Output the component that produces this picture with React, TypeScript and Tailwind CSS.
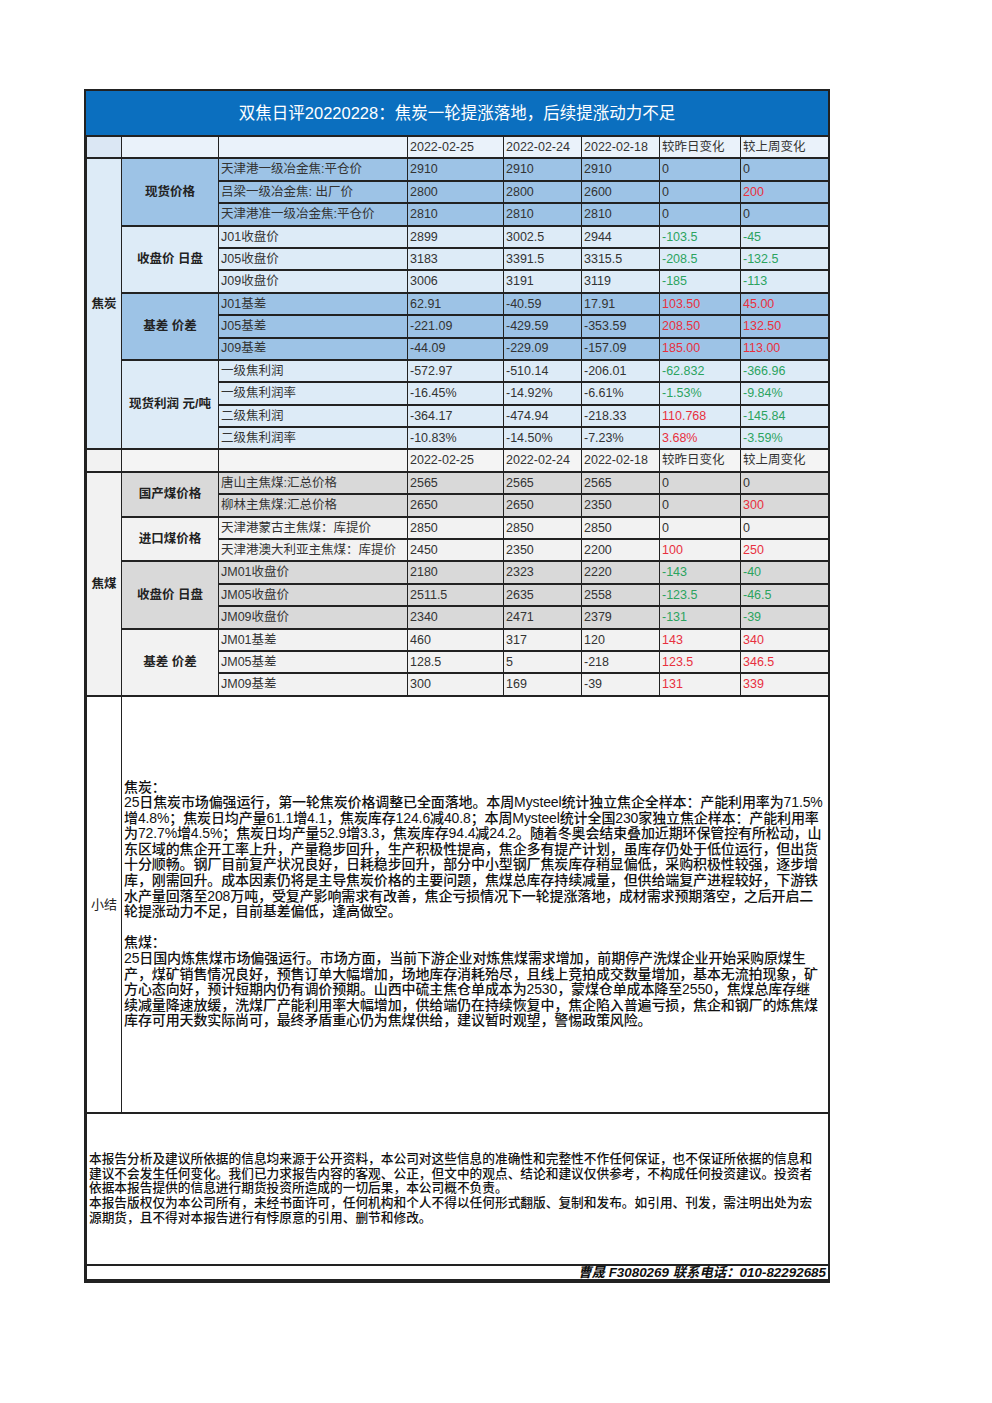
import React from 'react'

type Group = { name: string; bg: string; rows: string[][] }

const MID = 'bg-[#9dc3e6]'
const LIGHT = 'bg-[#ddebf7]'
const GRAY = 'bg-[#d9d9d9]'
const LGRAY = 'bg-[#f2f2f2]'

const coke: Group[] = [
  {
    name: '现货价格',
    bg: MID,
    rows: [
      ['天津港一级冶金焦:平仓价', '2910', '2910', '2910', '0', '0'],
      ['吕梁一级冶金焦: 出厂价', '2800', '2800', '2600', '0', '200'],
      ['天津港准一级冶金焦:平仓价', '2810', '2810', '2810', '0', '0'],
    ],
  },
  {
    name: '收盘价 日盘',
    bg: LIGHT,
    rows: [
      ['J01收盘价', '2899', '3002.5', '2944', '-103.5', '-45'],
      ['J05收盘价', '3183', '3391.5', '3315.5', '-208.5', '-132.5'],
      ['J09收盘价', '3006', '3191', '3119', '-185', '-113'],
    ],
  },
  {
    name: '基差 价差',
    bg: MID,
    rows: [
      ['J01基差', '62.91', '-40.59', '17.91', '103.50', '45.00'],
      ['J05基差', '-221.09', '-429.59', '-353.59', '208.50', '132.50'],
      ['J09基差', '-44.09', '-229.09', '-157.09', '185.00', '113.00'],
    ],
  },
  {
    name: '现货利润 元/吨',
    bg: LIGHT,
    rows: [
      ['一级焦利润', '-572.97', '-510.14', '-206.01', '-62.832', '-366.96'],
      ['一级焦利润率', '-16.45%', '-14.92%', '-6.61%', '-1.53%', '-9.84%'],
      ['二级焦利润', '-364.17', '-474.94', '-218.33', '110.768', '-145.84'],
      ['二级焦利润率', '-10.83%', '-14.50%', '-7.23%', '3.68%', '-3.59%'],
    ],
  },
]

const coal: Group[] = [
  {
    name: '国产煤价格',
    bg: GRAY,
    rows: [
      ['唐山主焦煤:汇总价格', '2565', '2565', '2565', '0', '0'],
      ['柳林主焦煤:汇总价格', '2650', '2650', '2350', '0', '300'],
    ],
  },
  {
    name: '进口煤价格',
    bg: LGRAY,
    rows: [
      ['天津港蒙古主焦煤：库提价', '2850', '2850', '2850', '0', '0'],
      ['天津港澳大利亚主焦煤：库提价', '2450', '2350', '2200', '100', '250'],
    ],
  },
  {
    name: '收盘价 日盘',
    bg: GRAY,
    rows: [
      ['JM01收盘价', '2180', '2323', '2220', '-143', '-40'],
      ['JM05收盘价', '2511.5', '2635', '2558', '-123.5', '-46.5'],
      ['JM09收盘价', '2340', '2471', '2379', '-131', '-39'],
    ],
  },
  {
    name: '基差 价差',
    bg: LGRAY,
    rows: [
      ['JM01基差', '460', '317', '120', '143', '340'],
      ['JM05基差', '128.5', '5', '-218', '123.5', '346.5'],
      ['JM09基差', '300', '169', '-39', '131', '339'],
    ],
  },
]

const cokeText = [
  '25日焦炭市场偏强运行，第一轮焦炭价格调整已全面落地。本周Mysteel统计独立焦企全样本：产能利用率为71.5%',
  '增4.8%；焦炭日均产量61.1增4.1，焦炭库存124.6减40.8；本周Mysteel统计全国230家独立焦企样本：产能利用率',
  '为72.7%增4.5%；焦炭日均产量52.9增3.3，焦炭库存94.4减24.2。随着冬奥会结束叠加近期环保管控有所松动，山',
  '东区域的焦企开工率上升，产量稳步回升，生产积极性提高，焦企多有提产计划，虽库存仍处于低位运行，但出货',
  '十分顺畅。钢厂目前复产状况良好，日耗稳步回升，部分中小型钢厂焦炭库存稍显偏低，采购积极性较强，逐步增',
  '库，刚需回升。成本因素仍将是主导焦炭价格的主要问题，焦煤总库存持续减量，但供给端复产进程较好，下游铁',
  '水产量回落至208万吨，受复产影响需求有改善，焦企亏损情况下一轮提涨落地，成材需求预期落空，之后开启二',
  '轮提涨动力不足，目前基差偏低，逢高做空。',
]

const coalText = [
  '25日国内炼焦煤市场偏强运行。市场方面，当前下游企业对炼焦煤需求增加，前期停产洗煤企业开始采购原煤生',
  '产，煤矿销售情况良好，预售订单大幅增加，场地库存消耗殆尽，且线上竞拍成交数量增加，基本无流拍现象，矿',
  '方心态向好，预计短期内仍有调价预期。山西中硫主焦仓单成本为2530，蒙煤仓单成本降至2550，焦煤总库存继',
  '续减量降速放缓，洗煤厂产能利用率大幅增加，供给端仍在持续恢复中，焦企陷入普遍亏损，焦企和钢厂的炼焦煤',
  '库存可用天数实际尚可，最终矛盾重心仍为焦煤供给，建议暂时观望，警惕政策风险。',
]

const disclaimer = [
  '本报告分析及建议所依据的信息均来源于公开资料，本公司对这些信息的准确性和完整性不作任何保证，也不保证所依据的信息和',
  '建议不会发生任何变化。我们已力求报告内容的客观、公正，但文中的观点、结论和建议仅供参考，不构成任何投资建议。投资者',
  '依据本报告提供的信息进行期货投资所造成的一切后果，本公司概不负责。',
  '本报告版权仅为本公司所有，未经书面许可，任何机构和个人不得以任何形式翻版、复制和发布。如引用、刊发，需注明出处为宏',
  '源期货，且不得对本报告进行有悖原意的引用、删节和修改。',
]

const dates = ['2022-02-25', '2022-02-24', '2022-02-18', '较昨日变化', '较上周变化']

const cell = 'border-x-[1.5px] border-y-2 border-[#222] px-[2px] whitespace-nowrap overflow-hidden'

// 涨红跌绿，0 保持黑色
function changeColor(v: string) {
  if (v.startsWith('-')) return 'text-[#2ca35f]'
  if (parseFloat(v) === 0) return 'text-[#333]'
  return 'text-[#e8303e]'
}

function HeaderRow({ first, rest }: { first: string; rest: string }) {
  return (
    <tr className="h-[22.4px]">
      <td className={`${cell} ${first}`}></td>
      <td className={`${cell} ${rest}`}></td>
      <td className={`${cell} ${rest}`}></td>
      {dates.map((d) => (
        <td key={d} className={`${cell} ${rest}`}>
          {d}
        </td>
      ))}
    </tr>
  )
}

function Section({ label, labelBg, groups }: { label: string; labelBg: string; groups: Group[] }) {
  const total = groups.reduce((n, g) => n + g.rows.length, 0)
  return (
    <>
      {groups.map((g, gi) =>
        g.rows.map((r, ri) => (
          <tr key={`${gi}-${ri}`} className="h-[22.4px]">
            {gi === 0 && ri === 0 && (
              <td rowSpan={total} className={`${cell} ${labelBg} text-center font-bold text-[#222]`}>
                {label}
              </td>
            )}
            {ri === 0 && (
              <td rowSpan={g.rows.length} className={`${cell} ${g.bg} text-center font-bold text-[#222]`}>
                {g.name}
              </td>
            )}
            {r.map((v, ci) => (
              <td key={ci} className={`${cell} ${g.bg} ${ci >= 4 ? changeColor(v) : 'text-[#333]'}`}>
                {v}
              </td>
            ))}
          </tr>
        ))
      )}
    </>
  )
}

export default function App() {
  return (
    <div className="min-h-[1403px] bg-white pt-[89px] pl-[84px] font-['Liberation_Sans','Noto_Sans_CJK_SC',sans-serif]">
      <div className="w-[746px] border-2 border-[#222]">
        <div className="flex h-[44px] items-center justify-center bg-[#0b6fbf] text-[16.5px] text-white">
          双焦日评20220228：焦炭一轮提涨落地，后续提涨动力不足
        </div>
        <table className="w-full table-fixed border-collapse text-[12.5px] leading-none">
          <colgroup>
            <col className="w-[35px]" />
            <col className="w-[97px]" />
            <col className="w-[189px]" />
            <col className="w-[96px]" />
            <col className="w-[78px]" />
            <col className="w-[78px]" />
            <col className="w-[81px]" />
            <col className="w-[88px]" />
          </colgroup>
          <tbody>
            <HeaderRow first="bg-[#dbe7f4]" rest="bg-[#eaf2fa] text-[#333]" />
            <Section label="焦炭" labelBg={LIGHT} groups={coke} />
            <HeaderRow first="bg-[#f2f2f2]" rest="bg-[#f4f4f4] text-[#333]" />
            <Section label="焦煤" labelBg={LGRAY} groups={coal} />
            <tr className="h-[417px]">
              <td className={`${cell} text-center text-[13px] text-[#222]`}>小结</td>
              <td colSpan={7} className={`${cell} text-[14px] leading-[15.6px] tracking-[-0.12px] font-medium text-[#111]`}>
                <div>焦炭：</div>
                {cokeText.map((l) => (
                  <div key={l}>{l}</div>
                ))}
                <div className="h-[15.6px]"></div>
                <div>焦煤：</div>
                {coalText.map((l) => (
                  <div key={l}>{l}</div>
                ))}
              </td>
            </tr>
            <tr className="h-[152px]">
              <td colSpan={8} className={`${cell} text-[12.7px] leading-[14.7px] font-medium text-[#111]`}>
                {disclaimer.map((l) => (
                  <div key={l}>{l}</div>
                ))}
              </td>
            </tr>
            <tr className="h-[15px]">
              <td colSpan={8} className={`${cell} text-right text-[13.4px] leading-[13px] font-bold italic text-[#111]`}>
                曹晟 F3080269 联系电话：010-82292685
              </td>
            </tr>
          </tbody>
        </table>
      </div>
    </div>
  )
}
